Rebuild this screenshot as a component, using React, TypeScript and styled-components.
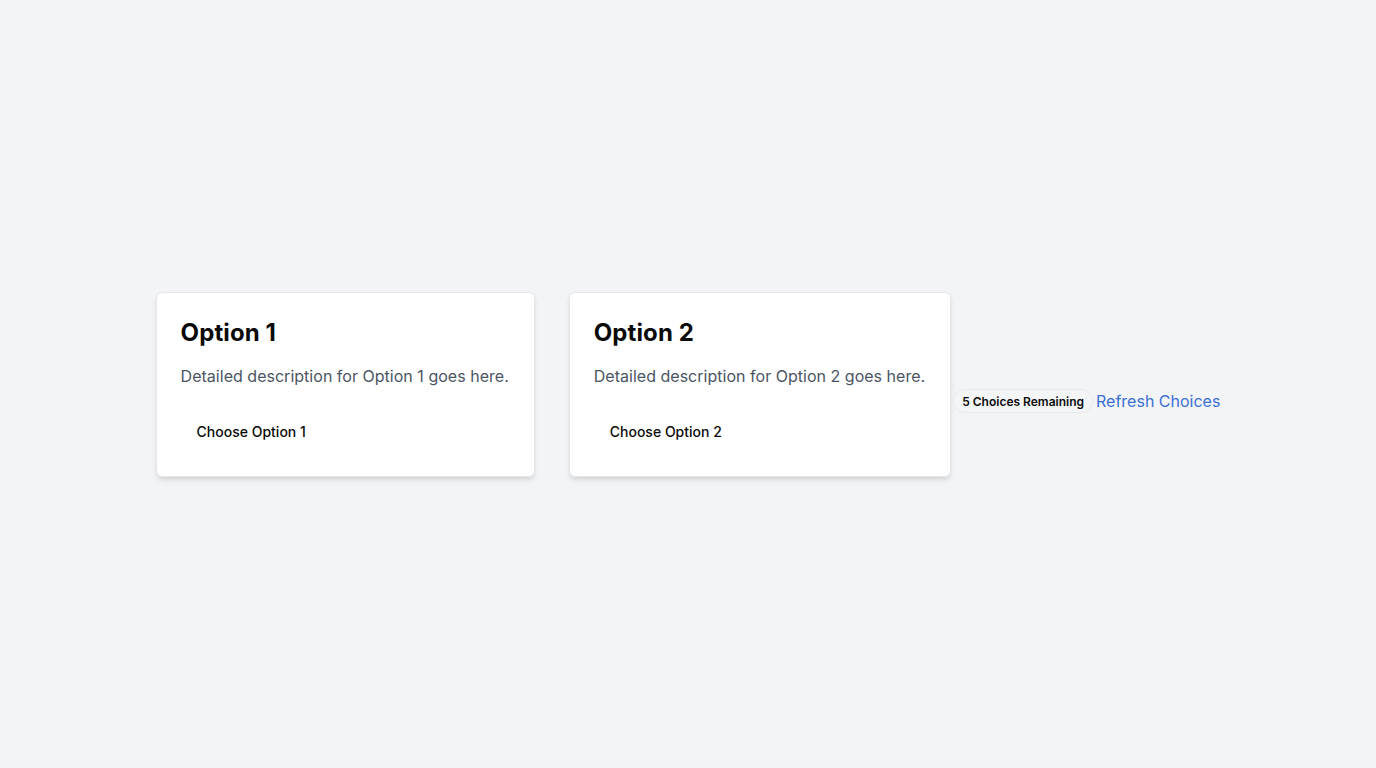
import React from "react";
import styled, { createGlobalStyle } from "styled-components";

const GlobalStyle = createGlobalStyle`
  html, body {
    margin: 0;
    padding: 0;
    background: #f3f4f6;
    font-family: Inter, "Noto Sans", sans-serif;
  }
  * { box-sizing: border-box; }
`;

const options = [
  { id: 1, title: "Option 1", text: "Detailed description for Option 1 goes here." },
  { id: 2, title: "Option 2", text: "Detailed description for Option 2 goes here." },
];

const App = () => {
  return (
    <>
      <GlobalStyle />
      <Page>
        <Row>
          <Cards>
            {options.map((o) => (
              <Card key={o.id}>
                <Title>{o.title}</Title>
                <Description>{o.text}</Description>
                <ChooseButton>Choose {o.title}</ChooseButton>
              </Card>
            ))}
          </Cards>
          <Side>
            <Badge>5 Choices Remaining</Badge>
            <RefreshLink>Refresh Choices</RefreshLink>
          </Side>
        </Row>
      </Page>
    </>
  );
};

export default App;

const Page = styled.div`
  min-height: 768px;
  display: flex;
  align-items: center;
  justify-content: center;
`;
const Row = styled.div`
  display: flex;
  align-items: center;
  gap: 2px;
`;
const Cards = styled.div`
  display: flex;
  gap: 34px;
`;
const Side = styled.div`
  display: flex;
  align-items: center;
  gap: 3px;
  margin-top: 34px;
`;
const Card = styled.div`
  background: #ffffff;
  border: 1px solid #e5e7eb;
  border-radius: 6px;
  padding: 24px 25px 24px 24px;
  box-shadow: 0 4px 6px -1px rgba(0, 0, 0, 0.1), 0 2px 4px -2px rgba(0, 0, 0, 0.1);
  display: flex;
  flex-direction: column;
`;
const Title = styled.h2`
  margin: 0;
  font-size: 24px;
  line-height: 32px;
  font-weight: 700;
  letter-spacing: 0.1px;
  color: #0a0a0a;
`;
const Description = styled.p`
  margin: 15px 0 0;
  font-size: 16px;
  line-height: 24px;
  letter-spacing: 0.02px;
  color: #4b5563;
`;
const ChooseButton = styled.button`
  align-self: flex-start;
  margin-top: 24px;
  height: 40px;
  padding: 0 16px;
  border: none;
  background: transparent;
  border-radius: 6px;
  font-family: inherit;
  font-size: 14px;
  font-weight: 500;
  color: #0a0a0a;
  cursor: pointer;
`;
const Badge = styled.span`
  display: inline-flex;
  align-items: center;
  height: 24px;
  padding: 0 8px;
  border: 1px solid #e8eaed;
  border-radius: 9999px;
  background: #f4f5f7;
  font-size: 12px;
  font-weight: 600;
  color: #0a0a0a;
`;
const RefreshLink = styled.a`
  font-size: 16px;
  line-height: 24px;
  color: #3b6fd4;
  cursor: pointer;
`;
